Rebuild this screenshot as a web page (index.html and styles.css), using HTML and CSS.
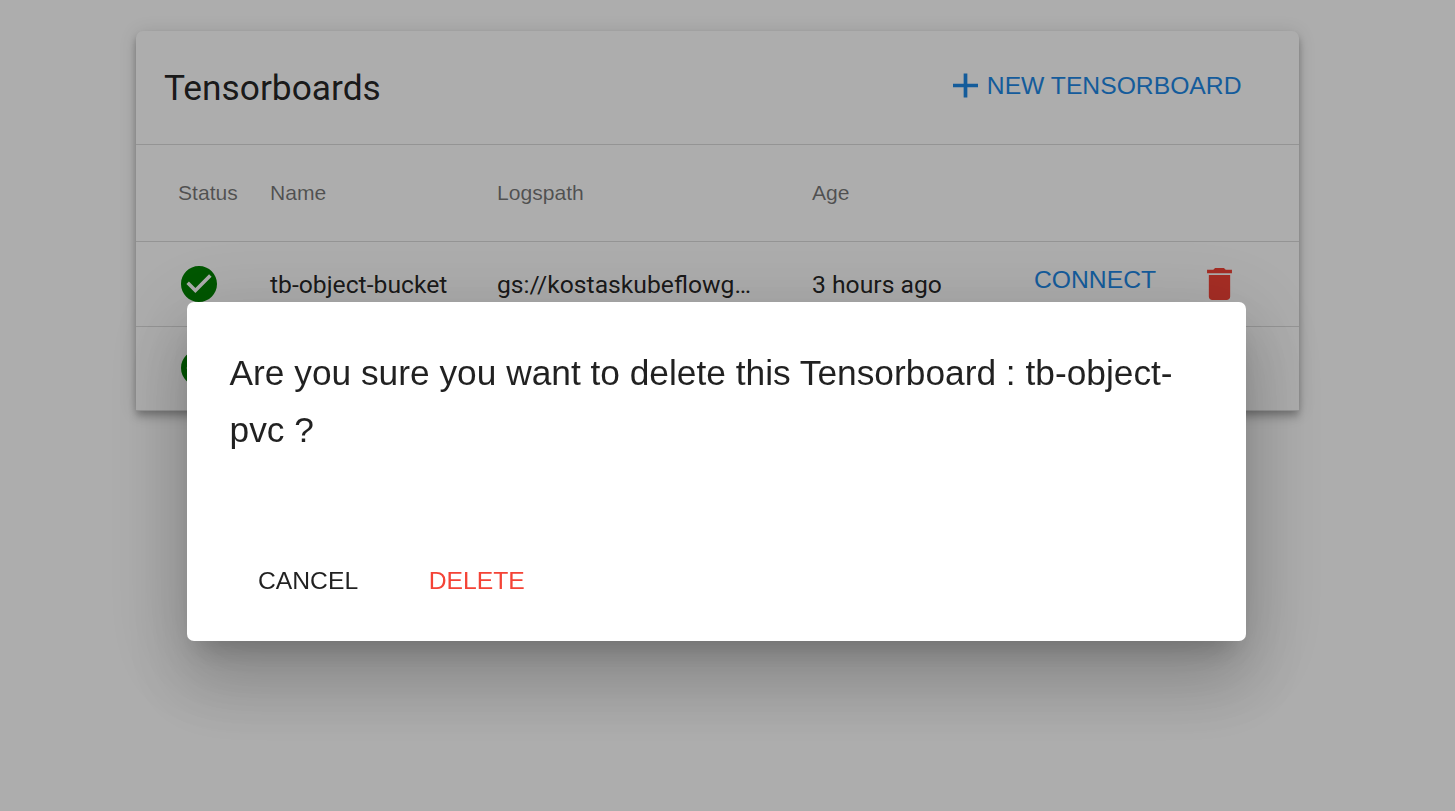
FILE: index.html
```html
<!DOCTYPE html>
<html lang="en">
<head>
<meta charset="utf-8">
<title>Tensorboards</title>
<link rel="stylesheet" href="styles.css">
</head>
<body>
<main class="card">
  <header class="toolbar">
    <h1 class="title">Tensorboards</h1>
    <button class="new-btn"><svg class="plus" viewBox="0 0 25 25"><path d="M0 12.5H25M12.5 0.5V24.5" fill="none" stroke="currentColor" stroke-width="3.7"/></svg><span class="new-label">NEW TENSORBOARD</span></button>
  </header>
  <div class="row head"><span>Status</span><span>Name</span><span>Logspath</span><span>Age</span></div>
  <div class="row first">
    <svg class="check" viewBox="2 2 20 20"><path fill="#008000" d="M12 2C6.48 2 2 6.48 2 12s4.48 10 10 10 10-4.48 10-10S17.52 2 12 2zm-2 15l-5-5 1.41-1.41L10 14.17l7.59-7.59L19 8l-9 9z"/></svg>
    <span>tb-object-bucket</span><span>gs://kostaskubeflowg…</span><span>3 hours ago</span>
    <button class="connect">CONNECT</button>
    <svg class="trash" viewBox="5 3 14 18"><path fill="#f44336" d="M6 19c0 1.1.9 2 2 2h8c1.1 0 2-.9 2-2V7H6v12zM19 4h-3.5l-1-1h-5l-1 1H5v2h14V4z"/></svg>
  </div>
  <div class="row last">
    <svg class="check" viewBox="2 2 20 20"><path fill="#008000" d="M12 2C6.48 2 2 6.48 2 12s4.48 10 10 10 10-4.48 10-10S17.52 2 12 2zm-2 15l-5-5 1.41-1.41L10 14.17l7.59-7.59L19 8l-9 9z"/></svg>
  </div>
</main>
<div class="overlay">
  <section class="dialog" role="dialog">
    <h2 class="question">Are you sure you want to delete this Tensorboard : tb-object-pvc ?</h2>
    <div class="actions"><button class="cancel">CANCEL</button><button class="delete">DELETE</button></div>
  </section>
</div>
</body>
</html>
```
FILE: styles.css
```css
* { box-sizing: border-box; }
body { margin: 0; height: 811px; overflow: hidden; background: #fff; color: rgba(0,0,0,.87); padding: 31px 156px 0 136px; font-family: "Liberation Sans", Arial, sans-serif; }
button { border: 0; padding: 0; background: none; font: 24.7px/36px "Liberation Sans", Arial, sans-serif; color: inherit; white-space: nowrap; }
.card { width: 1163px; height: 380px; border-radius: 7px 7px 0 0; background: #fff; box-shadow: 0 3.5px 7px -1.8px rgba(0,0,0,.2), 0 7px 9px rgba(0,0,0,.14), 0 1.8px 17.7px rgba(0,0,0,.12); }
.toolbar { height: 114px; display: flex; justify-content: space-between; padding: 0 57.5px 0 28px; border-bottom: 1px solid rgba(0,0,0,.14); }
.title { margin: 0; padding-top: 29px; font: 400 35.3px/57px Roboto, sans-serif; }
.new-btn { display: flex; align-items: center; gap: 9px; height: 36px; margin-top: 36px; color: #1e88e5; }
.new-label { padding-top: 2px; }
.plus { width: 25px; height: 25px; }
.row { display: grid; grid-template-columns: 92px 227px 315px 222px 173px 30px; align-items: center; padding-left: 42px; border-bottom: 1px solid rgba(0,0,0,.14); font: 24.7px/36px Roboto, sans-serif; }
.head { height: 97px; font: 21.1px/30px "Liberation Sans", Arial, sans-serif; color: rgba(0,0,0,.54); }
.first { height: 85px; }
.first span { padding-top: 1px; }
.last { height: 84px; padding-bottom: 1px; }
.check { width: 36px; height: 36px; margin-left: 3px; }
.connect { text-align: left; color: #1e88e5; padding-bottom: 8px; }
.trash { width: 25px; height: 32px; }
.overlay { position: fixed; inset: 0; display: flex; justify-content: center; align-items: flex-start; padding: 302px 22px 0 0; background: rgba(0,0,0,.32); }
.dialog { width: 1059px; height: 338.5px; padding: 41.5px 42.5px; border-radius: 7px; background: #fff; box-shadow: 0 19.5px 26.6px -12.4px rgba(0,0,0,.2), 0 42.5px 67.3px 5.3px rgba(0,0,0,.14), 0 16px 81.4px 14.2px rgba(0,0,0,.12); }
.question { margin: 0; font-size: 35.3px; line-height: 57px; font-weight: 400; }
.actions { display: flex; gap: 70.5px; padding: 105px 0 0 28.5px; }
.delete { color: #f44336; }
```
